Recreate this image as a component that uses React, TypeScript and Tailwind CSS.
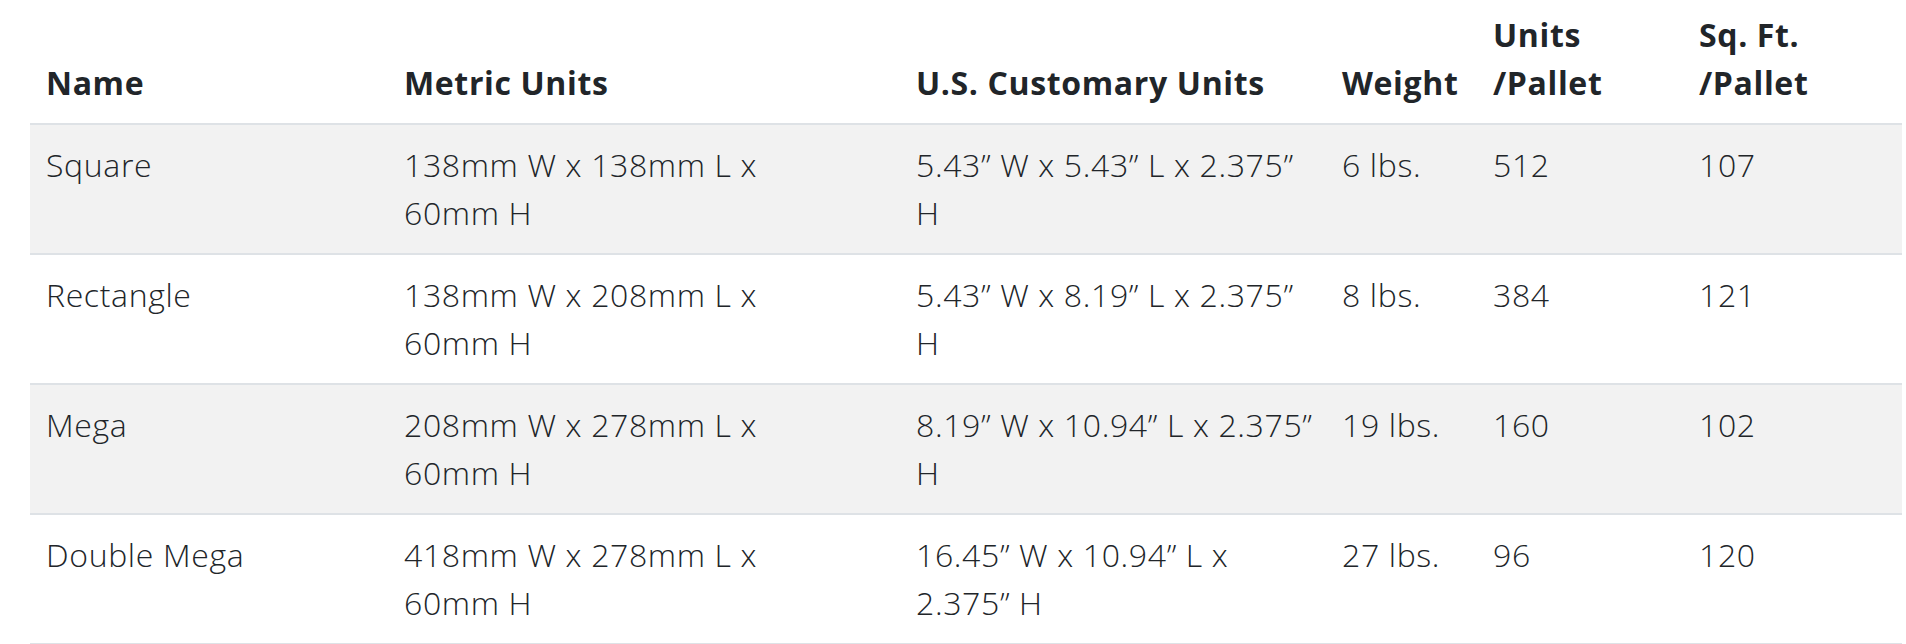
import React from "react";

type Row = {
  name: string;
  metric: [string, string];
  us: [string, string];
  weight: string;
  units: string;
  sqft: string;
};

const rows: Row[] = [
  {
    name: "Square",
    metric: ["138mm W x 138mm L x", "60mm H"],
    us: ["5.43” W x 5.43” L x 2.375”", "H"],
    weight: "6 lbs.",
    units: "512",
    sqft: "107",
  },
  {
    name: "Rectangle",
    metric: ["138mm W x 208mm L x", "60mm H"],
    us: ["5.43” W x 8.19” L x 2.375”", "H"],
    weight: "8 lbs.",
    units: "384",
    sqft: "121",
  },
  {
    name: "Mega",
    metric: ["208mm W x 278mm L x", "60mm H"],
    us: ["8.19” W x 10.94” L x 2.375”", "H"],
    weight: "19 lbs.",
    units: "160",
    sqft: "102",
  },
  {
    name: "Double Mega",
    metric: ["418mm W x 278mm L x", "60mm H"],
    us: ["16.45” W x 10.94” L x", "2.375” H"],
    weight: "27 lbs.",
    units: "96",
    sqft: "120",
  },
];

export default function App() {
  const th =
    "text-left align-bottom font-bold pt-[11px] pb-4 px-4 whitespace-nowrap";
  const td =
    "align-top pt-4 pb-4 px-4 whitespace-nowrap border-t-2 border-b-2 border-[#dee2e6]";
  return (
    <div className="w-[1906px] h-[644px] bg-white overflow-hidden pl-[30px]">
      <table
        className="table-fixed border-collapse w-[1872px] text-[32px] leading-[48px] text-[#212529] tracking-[0.02em]"
        style={{ fontFamily: '"Open Sans", "Noto Sans", sans-serif' }}
      >
        <colgroup>
          <col className="w-[358px]" />
          <col className="w-[512px]" />
          <col className="w-[426px]" />
          <col className="w-[151px]" />
          <col className="w-[206px]" />
          <col className="w-[219px]" />
        </colgroup>
        <thead>
          <tr className="border-b-2 border-[#dee2e6]">
            <th className={th}>Name</th>
            <th className={th}>Metric Units</th>
            <th className={th}>U.S. Customary Units</th>
            <th className={th}>Weight</th>
            <th className={th}>
              Units
              <br />
              /Pallet
            </th>
            <th className={th}>
              Sq. Ft.
              <br />
              /Pallet
            </th>
          </tr>
        </thead>
        <tbody className="font-light">
          {rows.map((r, i) => (
            <tr key={r.name} className={i % 2 === 0 ? "bg-[#f2f2f2]" : "bg-white"}>
              <td className={td}>{r.name}</td>
              <td className={td}>
                {r.metric[0]}
                <br />
                {r.metric[1]}
              </td>
              <td className={td}>
                {r.us[0]}
                <br />
                {r.us[1]}
              </td>
              <td className={td}>{r.weight}</td>
              <td className={td}>{r.units}</td>
              <td className={td}>{r.sqft}</td>
            </tr>
          ))}
        </tbody>
      </table>
    </div>
  );
}
